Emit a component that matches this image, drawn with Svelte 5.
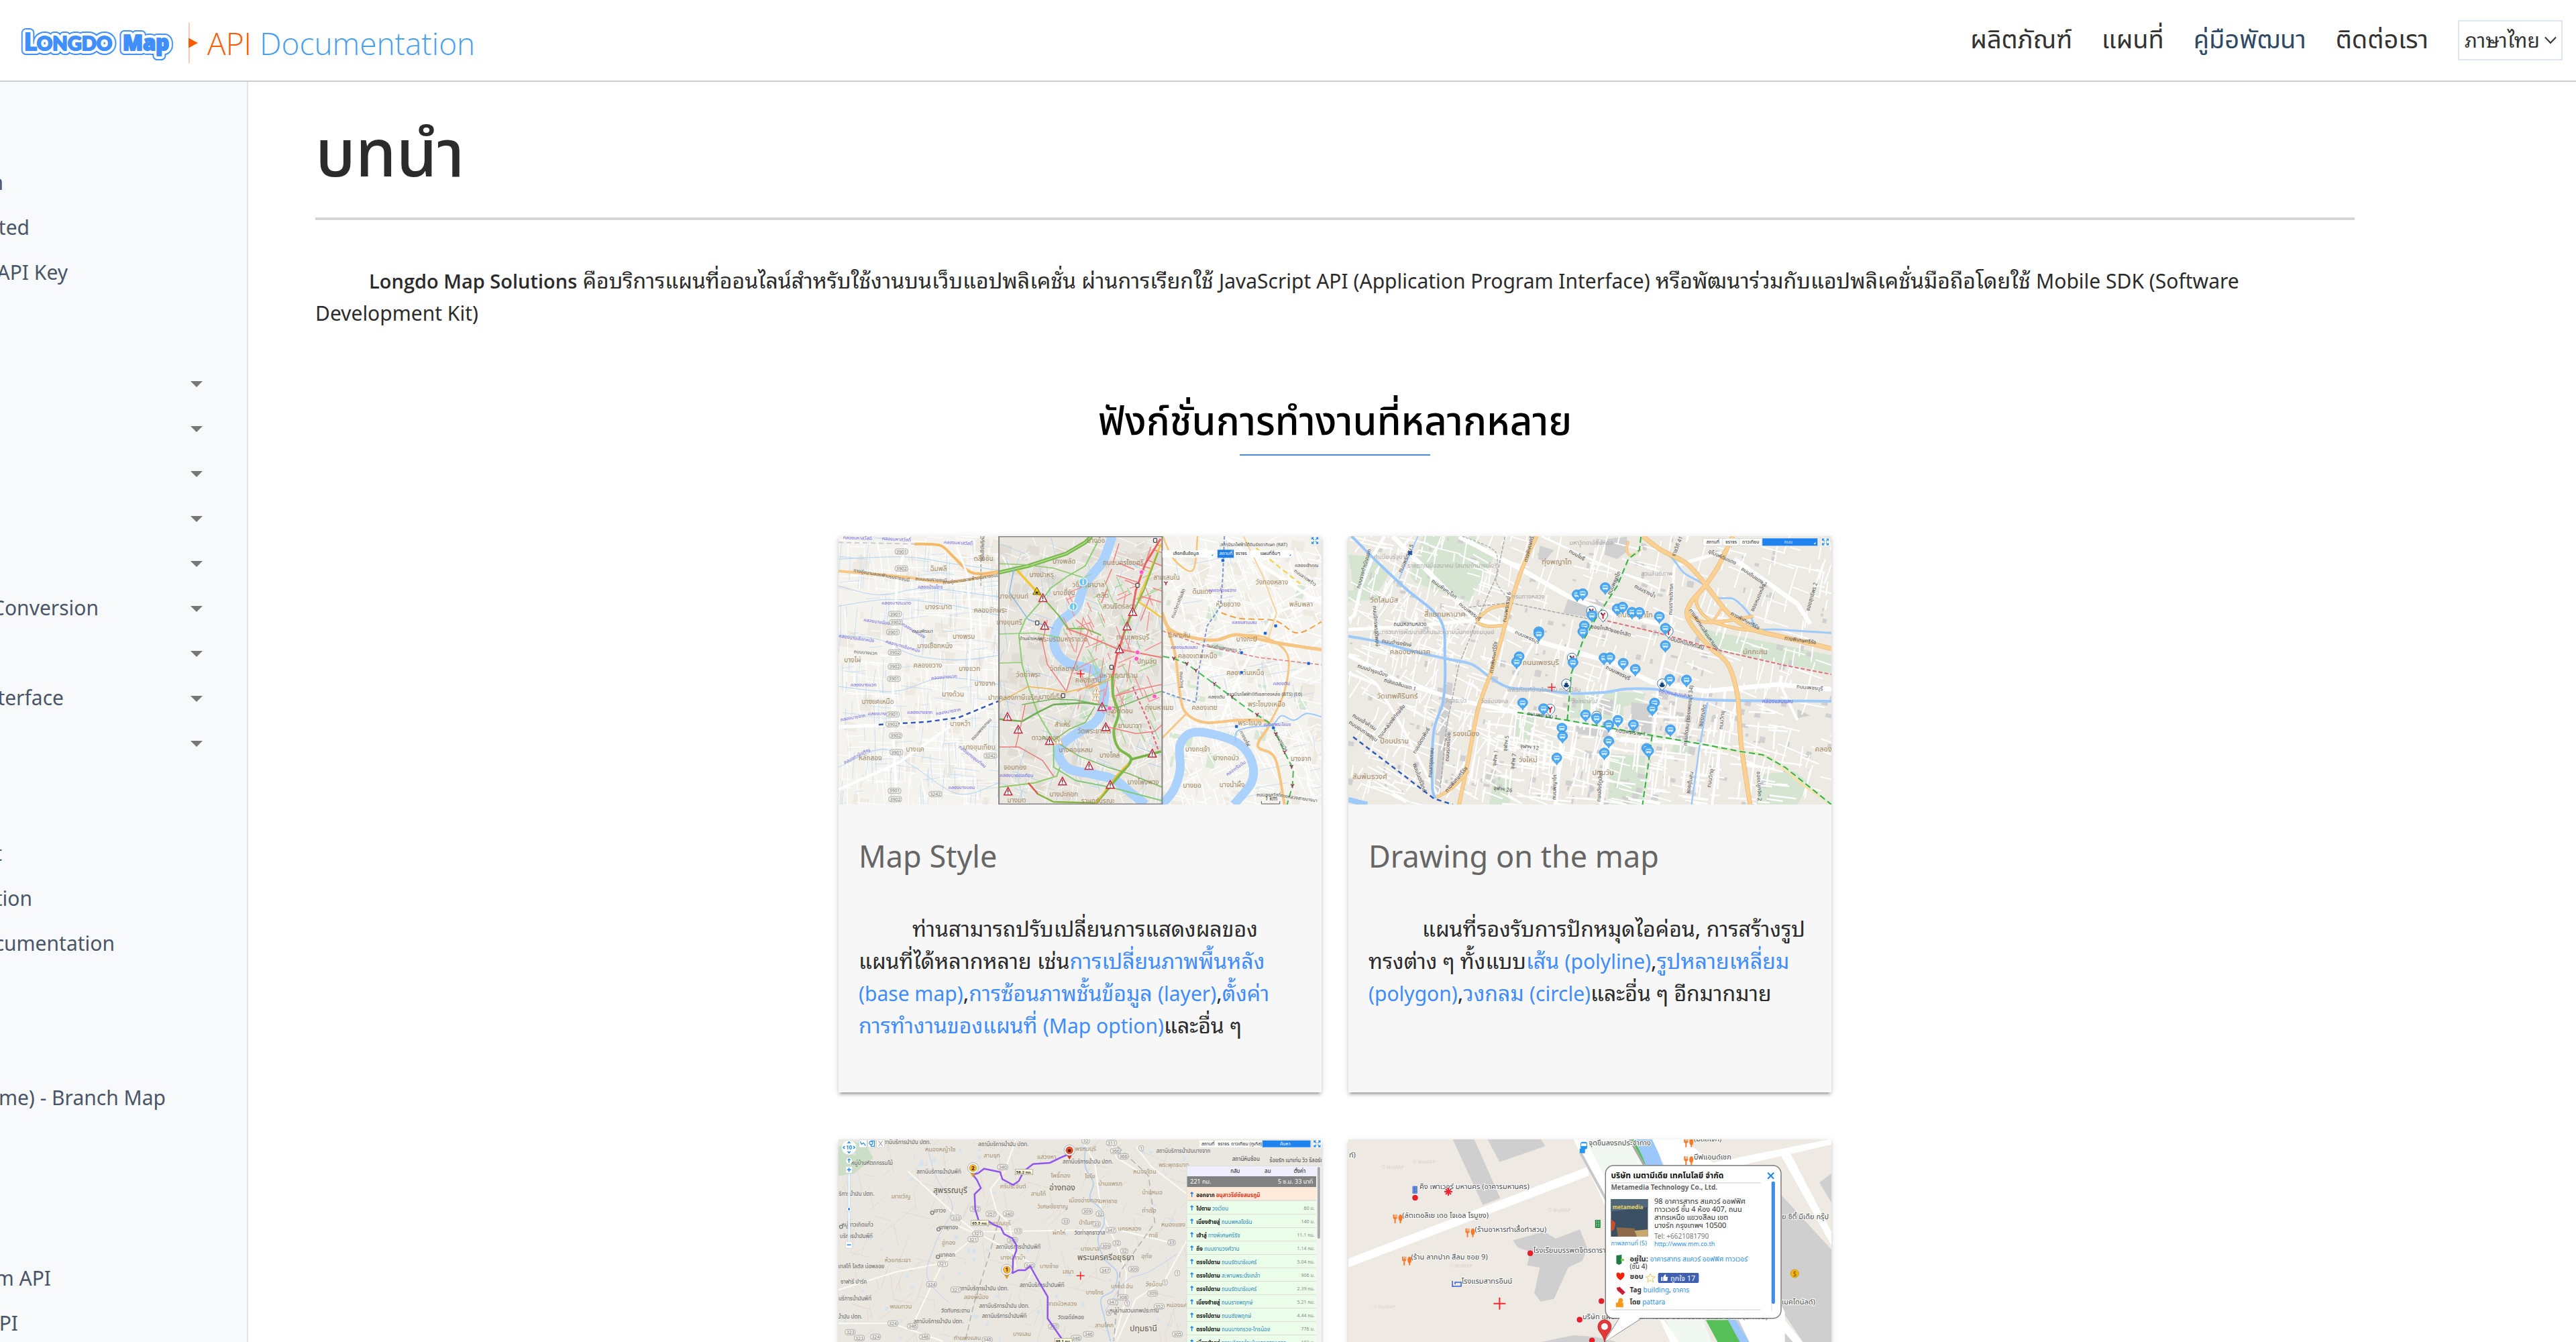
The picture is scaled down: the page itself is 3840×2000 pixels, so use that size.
<script>
  const W = 720 / 1527;

  const px = (x) => Math.round((x - 20) * W * 10) / 10;
  const py = (y) => Math.round((y - 27) / 0.3) / 10;
  const read = (s) => s.trim().split(/\s+/).map((p) => { const [x, y] = p.split(',').map(Number); return [px(x), py(y)]; });
  const line = (s) => 'M' + read(s).map((p) => p.join(' ')).join('L');
  const curve = (s) => {
    const p = read(s);
    let d = `M${p[0][0]} ${p[0][1]}`;
    for (let i = 0; i < p.length - 1; i++) {
      const a = p[i - 1] ?? p[i], b = p[i], c = p[i + 1], e = p[i + 2] ?? c;
      d += `C${(b[0] + (c[0] - a[0]) / 6).toFixed(1)} ${(b[1] + (c[1] - a[1]) / 6).toFixed(1)} ${(c[0] - (e[0] - b[0]) / 6).toFixed(1)} ${(c[1] - (e[1] - b[1]) / 6).toFixed(1)} ${c[0]} ${c[1]}`;
    }
    return d;
  };
  const points = (s) => s.trim().split(/\s+/).map((p) => p.split(',').map(Number));

  function random(seed) {
    return () => { seed = (seed * 16807) % 2147483647; return seed / 2147483647; };
  }
  // Short street pieces scattered over an area, running along one of the given headings.
  function streets(seed, count, x0, y0, x1, y1, min, max, angles) {
    const r = random(seed);
    let d = '';
    for (let i = 0; i < count; i++) {
      const x = x0 + r() * (x1 - x0), y = y0 + r() * (y1 - y0);
      const a = ((angles[Math.floor(r() * angles.length)] + r() * 6 - 3) * Math.PI) / 180;
      const l = min + r() * (max - min);
      d += `M${x.toFixed(1)} ${y.toFixed(1)}l${(Math.cos(a) * l).toFixed(1)} ${(Math.sin(a) * l).toFixed(1)}`;
    }
    return d;
  }
  function blocks(seed, count, x0, y0, x1, y1, size) {
    const r = random(seed);
    let d = '';
    for (let i = 0; i < count; i++) {
      const x = x0 + r() * (x1 - x0), y = y0 + r() * (y1 - y0), w = 2 + r() * size, h = 2 + r() * size;
      d += `M${x.toFixed(1)} ${y.toFixed(1)}l${w.toFixed(1)} ${(w * 0.2).toFixed(1)}l${(-h * 0.2).toFixed(1)} ${h.toFixed(1)}l${(-w).toFixed(1)} ${(-w * 0.2).toFixed(1)}z`;
    }
    return d;
  }

  const nav = [
    { label: 'ผลิตภัณฑ์' }, { label: 'แผนที่' }, { label: 'คู่มือพัฒนา', active: true }, { label: 'ติดต่อเรา' }
  ];

  const menu = [
    [{ t: 'n', w: 5 }, { t: 'ted', w: 44 }, { t: 'API Key', w: 101 }],
    [{ more: 1 }, { more: 1 }, { more: 1 }, { more: 1 }, { more: 1 }, { t: 'Conversion', w: 147, more: 1 }, { more: 1 }, { t: 'terface', w: 95, more: 1 }, { more: 1 }],
    [{ t: 't', w: 3 }, { t: 'tion', w: 48 }, { t: 'cumentation', w: 171 }],
    [{ t: 'ame) - Branch Map', w: 247 }],
    [{ t: 'm API', w: 76 }, { t: 'PI', w: 27 }]
  ];

  const alerts = points('666,303 672,427 950,365 932,430 908,532 853,790 865,880 588,891 554,834 687,942 812,1053 728,1123 556,1168 879,1138 1012,998');
  const cautions = points('835,718 835,747 717,942');
  const stations = points('1235,136 1402,428 1369,461 1294,548 1294,637 1506,596 1395,884 1278,878');
  const bts = points('1055,238 1080,574 1121,598 1150,628 1208,688 1264,745 1343,826 1402,912 1430,993 1452,1058 1455,1144');
  const shops = points('978,188 965,547 962,575 877,797 1019,743');
  const shields1 = [[219,96,'3901'],[219,172,'3902'],[199,375,'3901'],[201,412,'3902'],[192,456,'3901'],[197,547,'3902'],[197,610,'3902'],[195,665,'3901'],[192,824,'3901'],[190,868,'3902'],[201,919,'3902'],[203,993,'3901'],[197,1166,'3901'],[199,1203,'3902'],[326,1180,'3242'],[500,1009,'3242']];
  const brown = '#a0875f', dark = '#555', violet = '#6f66dd';
  const names1 = [
    [336,183,'ฉิมพลี'],[478,138,'ตลิ่งชัน'],[336,354,'บางระมาด'],[416,487,'บางพรม'],[325,528,'บางเชือกหนัง'],[64,592,'บางไผ่'],[302,616,'คลองขวาง'],[434,629,'บางแวก'],[483,695,'บางจาก'],[382,745,'บางด้วน'],[144,778,'บางแคเหนือ'],[405,877,'บางหว้า'],[262,990,'บางแค'],[120,1030,'หลักสอง'],[465,980,'บางขุนเทียน'],[500,368,'คลองชักพระ'],
    [662,210,'บางบำหรุ'],[733,150,'บางพลัด'],[834,58,'บางอ้อ'],[733,292,'บางยี่ขัน'],[572,306,'บางขุนนนท์'],[810,256,'วชิรพยาบาล'],[855,304,'ดุสิต'],[908,350,'สวนจิตรลดา'],[920,157,'ถนนนครไชยศรี'],[560,422,'บางขุนศรี'],[730,499,'พระบรมมหาราชวัง'],[620,656,'วัดท่าพระ'],[733,629,'วัดกัลยาณ์'],[810,682,'คลองสาน'],[905,660,'มหาพฤฒาราม'],[995,597,'ปทุมวัน'],[950,490,'ถนนเพชรบุรี'],[575,760,'ปากคลองภาษีเจริญ'],[693,757,'บางยี่เรือ'],[728,880,'สำเหร่'],[829,910,'วัดพระยาไกร'],[941,884,'ยานนาวา'],[908,819,'ทุ่งวัดดอน'],[675,940,'ดาวคะนอง'],[770,994,'บางคอแหลม'],[877,1017,'บางโคล่'],[578,1071,'จอมทอง'],[732,1190,'บางปะกอก'],[583,1219,'บางมด'],[983,1136,'บางโพงพาง'],[840,1220,'ราษฎร์บูรณะ'],[1034,803,'ทุ่งมหาเมฆ'],
    [1057,223,'สามเสนใน'],[1170,286,'ดินแดง'],[1390,242,'วังทองหลาง'],[1252,342,'ห้วยขวาง'],[1482,342,'พลับพลา'],[1097,479,'มักกะสัน'],[1310,497,'บางกะปิ'],[1155,574,'คลองเตยเหนือ'],[1306,649,'คลองตันเหนือ'],[1373,789,'พระโขนงเหนือ'],[1177,803,'คลองเตย'],[1320,872,'พระโขนง'],[1155,990,'บางกะเจ้า'],[1245,1029,'บางกอบัว'],[1482,1031,'บางจาก'],[1138,1152,'บางยอ'],[1264,1148,'บางน้ำผึ้ง']
  ];
  const canals1 = [[80,42,'คลองมหาสวัสดิ์',2],[203,48,'คลองมหาสวัสดิ์',3],[398,64,'คลองมหาสวัสดิ์',3],[310,262,'คลองบ้านไทร',0],[203,332,'คลองบางระมาด',0],[140,416,'คลองบางน้อย',8],[255,455,'คลองบางน้อย',30],[76,491,'คลองบางเชือกหนัง',8],[222,526,'คลองบางเชือกหนัง',16],[354,664,'คลองบางแวก',-5],[99,700,'คลองบางแวก',0],[66,845,'คลองบางจาก',-10],[153,829,'คลองบางจาก',0],[277,823,'คลองบางจาก',0],[368,818,'คลองบางจาก',-10],[80,1016,'คลองภาษีเจริญ',-28],[440,1018,'คลองบางขุนเทียน',38],[409,1159,'คลองบางบอน',0],[583,1103,'คลองบางขุนเทียน',0],[1233,276,'คลองห้วยขวาง',0],[1303,419,'คลองสามเสน',0],[1113,531,'คลองแสนแสบ',0],[1420,692,'คลองตัน',0],[1407,876,'คลองพระโขนง',0],[1279,1070,'คลองเรือบิน',-35]];
  const roads1 = [[155,208,'ทางคู่ขนานลอยฟ้าบรมราชชนนี',10],[313,228,'ถนนบรมราชชนนี',3],[440,225,'ทางคู่ขนานลอยฟ้าบรมราชชนนี',-8],[105,554,'ถนนบางแวก',5],[286,458,'ถนนพัฒนา',0],[475,895,'ถนนเพชรเกษม',-48],[1333,71,'สถานีรถไฟฟ้าใต้ดินรัชดาภิเษก (RAT)',0],[1366,742,'สถานีรถไฟฟ้าบีทีเอสทองหล่อ (BTS) (E6)',0],[1215,754,'คลองตัน',0],[1500,166,'คลองเจ้าคุณ',0],[1237,534,'ถนนกำแพงเพชร 7',10],[1492,218,'ถนนลาดพร้าว',35],[1098,330,'ถนนวิภาวดีรังสิต',-68],[1300,935,'ทางรถไฟ',62],[1415,950,'ถนนสุขุมวิท',60],[1475,1205,'ทางหลวงสายบางนา',8],[1100,670,'ถนนวิทยุ',88],[480,80,'ถนนชัยพฤกษ์',-88],[1380,1190,'ถนนสุขสวัสดิ์',0],[628,491,'บ้านช่างหล่อ',0]];

  const buses = points('743,291 761,286 832,259 870,354 887,346 917,369 940,370 1003,389 790,383 766,430 761,457 622,456 622,467 1022,440 1022,518 560,568 552,592 730,595 828,574 847,572 889,597 927,624 1036,669 1089,672 571,775 637,800 988,775 981,802 770,828 805,843 872,852 843,874 921,872 1038,894 695,887 697,924 843,946 829,998 963,978 969,990 679,1021');
  const trains = points('788,364 825,382 1032,454 727,574 658,802 804,834');
  const boats = points('709,690 1012,689');
  const names2 = [[133,325,'วัดโสมนัส'],[325,387,'สี่แยกมหานาค'],[215,556,'คลองมหานาค'],[679,152,'ทุ่งพญาไท'],[628,602,'ถนนเพชรบุรี'],[927,389,'ถนนพญาไท'],[1306,554,'มักกะสัน'],[175,754,'วัดเทพศิรินทร์'],[392,922,'รองเมือง'],[166,955,'ป้อมปราบ'],[88,1114,'สัมพันธวงศ์'],[588,1037,'วังใหม่'],[825,1096,'ปทุมวัน'],[1522,989,'คลอง']];
  const places2 = [[155,130,'ทำเนียบรัฐบาล'],[347,168,'ราชตฤณมัยสมาคม (สนามม้านางเลิ้ง)'],[788,65,'มหาวิทยาลัยมหิดล'],[995,205,'สวนสันติภาพ'],[588,305,'กรมทางหลวง'],[290,465,'กระทรวงการพัฒนาสังคมและความมั่นคงของมนุษย์'],[638,724,'พิพิธภัณฑ์บ้านไทยจิม ทอมป์สัน'],[767,773,'วังสระปทุม'],[482,773,'วัดชัยมงคล'],[360,770,'วัดสระบัว']];
  const roads2 = [[74,175,'ถนนราชดำเนินนอก',-74],[207,130,'ถนนพระราม 5',-66],[598,75,'ทางพิเศษศรีรัช',-76],[526,345,'ถนนพระราม 6',-80],[484,570,'ทางพิเศษศรีรัช',-82],[320,270,'ถนนพิษณุโลก',36],[400,370,'ถนนเพชรบุรี',38],[215,428,'ถนนหลานหลวง',0],[583,485,'ถนนเพชรบุรี',24],[172,512,'ถนนดำรงรักษ์',8],[95,635,'ถนนบำรุงเมือง',18],[182,698,'ถนนเฉลิมเขต 1',16],[102,430,'ถนนจักรพรรดิพงษ์',86],[870,645,'ถนนเพชรบุรี',26],[955,280,'ถนนรางน้ำ',28],[740,118,'ถนนโยธี',30],[1065,75,'ราชวิถี 41',-68],[1200,128,'อุโมงค์ดินแดง',24],[1300,215,'ถนนดินแดง 1',34],[1272,412,'ทางพิเศษศรีรัช',28],[1448,500,'ทางพิเศษศรีรัช',8],[1085,512,'ถนนนิคมมักกะสัน',16],[1140,450,'ทางพิเศษเฉลิมมหานคร',56],[1320,305,'ซอยหมอเหล็ง',-66],[1490,300,'ซอยสุทธิพร 2',-74],[1478,712,'ถนนเพชรบุรี',5],[1100,830,'ถนนชิดลม (ซอยเพชรบุรี 34)',-84],[1145,830,'ซอยสมคิด',-80],[1206,850,'ถนนวิทยุ',-84],[1105,1130,'ซอยต้นสน',-80],[1170,1110,'ถนนวิทยุ',-80],[912,912,'ถนนพระราม 1',8],[633,836,'ถนนพระราม 1',8],[592,978,'จุฬาฯ 12',8],[508,1166,'จุฬาฯ 26',8],[524,955,'จุฬาฯ 5',-82],[490,1020,'จุฬาฯ 1',-82],[547,1035,'จุฬาฯ 7',-82],[340,970,'ถนนรองเมือง',-86],[286,1040,'ถนนกรุงเกษม',-86],[68,865,'ถนนเจ้าคำรบ',32],[160,860,'ถนนหลวงพิทักษ์ชัย',-52],[255,945,'ถนนมิตรพันธ์',-60],[365,1120,'ทางพิเศษศรีรัช',-50],[677,1150,'ถนนพญาไท',-88],[820,1145,'ถนนอังรีดูนังต์',-86],[1313,1145,'ซอยปลูกจิต 2',88],[1045,310,'ถนนราชปรารภ',-88],[865,240,'ถนนพญาไท',-66],[64,905,'ถนนยมราชสุขุม',34],[240,1110,'ถนนไมตรีจิตต์',70],[818,445,'ซอยโกสิต',8],[880,466,'ซอยโกสิต',14]];

  const steps = [
    ['ไปตาม', 'วงเวียน', '60 ม.'], ['เบี่ยงซ้ายสู่', 'ถนนพหลโยธิน', '140 ม.'], ['เข้าสู่', 'ทางพิเศษศรีรัช', '11.1 กม.'], ['ถึง', 'ถนนงามวงศ์วาน', '1.14 กม.'],
    ['ตรงไปตาม', 'ถนนรัตนาธิเบศร์', '5.04 กม.'], ['ตรงไปตาม', 'สะพานพระนั่งเกล้า', '906 ม.'], ['ตรงไปตาม', 'ถนนรัตนาธิเบศร์', '2.39 กม.'], ['เบี่ยงซ้ายสู่', 'ถนนราชพฤกษ์', '5.21 กม.'],
    ['ตรงไปตาม', 'ถนนชัยพฤกษ์', '4.44 กม.'], ['ตรงไปตาม', 'ถนนบางกรวย-ไทรน้อย', '776 ม.'], ['เบี่ยงซ้ายสู่', 'ทางบริการด้านในของทางหลวง', '182 ม.']
  ];
  const shields3 = [[539,148,340],[801,32,32],[883,40,311],[896,76,366],[920,100,366],[977,64,1],[502,357,357],[557,357,340],[452,335,322],[391,375,333],[588,434,33],[460,446,321],[445,471,321],[738,391,33],[836,403,33],[806,346,309],[846,357,32],[881,430,347],[865,501,309],[899,488,32],[923,524,32],[1073,485,33],[349,581,321],[314,672,324],[391,696,321],[624,588,340],[863,609,347],[953,604,309],[1052,664,1],[1013,713,309],[887,751,347],[932,757,1],[919,730,308],[874,800,9],[1034,771,352],[192,847,324],[254,860,346],[57,886,323],[137,907,324],[292,907,346],[490,920,346],[700,860,340],[771,912,346],[810,895,346],[1091,895,305],[86,912,323],[1091,622,1],[570,475,340]];
  const names3 = [[342,78,'หนองหญ้าไซ'],[505,106,'สามชุก'],[217,288,'เลาขวัญ'],[368,495,'อู่ทอง'],[207,574,'ห้วยกระเจา'],[678,112,'แสวงหา'],[801,74,'พรหมบุรี'],[572,244,'ศรีประจันต์'],[722,194,'โพธิ์ทอง'],[815,197,'ไชโย'],[652,276,'สามโก้'],[697,333,'วิเศษชัยชาญ'],[798,305,'เมืองอ่างทอง'],[872,310,'มหาราช'],[879,231,'บ้านแพรก'],[988,176,'หนองโดน'],[1080,148,'พระพุทธบาท'],[1012,269,'บ้านหมอ'],[1002,351,'ท่าเรือ'],[804,406,'ป่าโมก'],[717,449,'ผักไห่'],[940,431,'นครหลวง'],[1015,461,'ภาชี'],[1078,413,'หนองแซง'],[815,523,'บางบาล'],[994,556,'อุทัย'],[571,561,'บางปลาม้า'],[686,601,'บางซ้าย'],[746,624,'เสนา'],[524,407,'สุพรรณบุรี'],[830,716,'บางไทร'],[916,689,'บางปะอิน'],[1017,682,'วังน้อย'],[455,739,'สองพี่น้อง'],[217,779,'พนมทวน'],[727,767,'ลาดบัวหลวง'],[860,865,'สามโคก'],[600,904,'บางเลน'],[427,922,'กำแพงแสน'],[1090,775,'หนองแค']];
  const stops3 = [[232,46,'สถานีบริการน้ำมัน ปตท.'],[541,54,'สถานีบริการน้ำมัน ปตท.'],[808,132,'สถานีบริการน้ำมัน ปตท.'],[1110,84,'สถานีบริการน้ำมันบางจาก'],[337,177,'สถานีบริการน้ำมันพีที'],[72,276,'บริการน้ำมัน ปตท.'],[588,514,'สถานีบริการน้ำมันพีที'],[663,684,'สถานีบริการน้ำมันพีที'],[478,700,'สถานีบริการน้ำมัน ปตท.'],[544,778,'สถานีบริการน้ำมัน ปตท.'],[544,821,'สถานีบริการน้ำมันพีที'],[336,846,'สถานีบริการน้ำมัน ปตท.'],[126,138,'หมู่บ้านหัตถกรรมไม้'],[80,415,'หมู่ดาวเกิดแก้ว'],[76,465,'บริการน้ำมันพีที'],[92,599,'เทสโก้ โลตัส บ่อพลอย'],[68,670,'ซาฟารี ปาร์ค'],[72,744,'บริการน้ำมันพีที'],[56,824,'น้ำมัน ปตท.'],[390,797,'วัดทับกระดาน'],[755,828,'วัดเจดีย์หอย'],[955,797,'หมู่บ้านสวนเทพประทาน'],[814,449,'วัดท่าสุทธาวาส'],[340,352,'เขาวง'],[367,427,'เขาพุทอง'],[363,550,'เขาคอก']];

  const food4 = [[176,378],[405,440],[205,566],[1096,38],[1096,118]];
  const dots4 = points('231,285 595,533 820,747 751,830 790,923');
  const names4 = [[245,245,'คิง เพาเวอร์ มหานคร (อาคารมหานคร)'],[190,376,'(ลัตเตอลิเย เดอ โจเอล โรบูชง)'],[420,437,'(ร้านอาหารทำเสื้อทำสวน)'],[605,531,'โรงเรียนบรรพตจิตรดาราม)'],[218,562,'(ร้าน ลาภปาก สีลม ซอย 9)'],[378,670,'โรงแรมสาทรอินน์'],[780,50,'จุดขึ้นลงรถประจำทาง'],[1112,34,'(มิสสโจ๊ก)'],[1112,114,'บีฟแอนด์เชก'],[1390,382,'ย ซิตี้ มีเดีย กรุ๊ป'],[1390,762,'เมคโดนัลด์)'],[22,104,'ท์)'],[760,829,'บริษัท แผนที่'],[945,829,'เทคโนโลยี อินเตอร์เนชั่นแนล จำกัด (มหาชน)']];
</script>

{#snippet labels(list, size, color, dy)}
  {#each list as [x, y, t, a]}
    <text x={px(x)} y={py(y + dy)} font-size={size} fill={color} text-anchor="middle" transform={a ? `rotate(${a} ${px(x)} ${py(y + dy)})` : undefined}>{t}</text>
  {/each}
{/snippet}

{#snippet shields(list, dy)}
  {#each list as [x, y, t]}
    <rect x={px(x) - (String(t).length * 4 + 3) / 2} y={py(y + dy) - 4} width={String(t).length * 4 + 3} height="8" rx="3" fill="#f6f4ee" stroke="#999" stroke-width=".8" />
    <text x={px(x)} y={py(y + dy) + 2.500} font-size="7" fill="#777" text-anchor="middle">{t}</text>
  {/each}
{/snippet}

{#snippet cross(x, y, dy)}
  <path d={`M${px(x) - 6} ${py(y + dy)}h12M${px(x)} ${py(y + dy) - 6}v12`} stroke="#f5242b" stroke-width="1.5" />
{/snippet}

{#snippet expand(x, y, dy)}
  <g transform={`translate(${px(x)} ${py(y + dy)})`}>
    <rect x="-7" y="-7" width="14" height="14" rx="3" fill="#fff" stroke="#d5d5d5" stroke-width=".6" />
    <path d="M-4.500-1.500V-4.500H-1.500M1.500-4.500H4.500V-1.500M4.500 1.500V4.500H1.500M-1.500 4.500H-4.500V1.500M-4-4l3 3M4-4l-3 3M4 4l-3-3M-4 4l3-3" fill="none" stroke="#2a8cec" stroke-width="1.300" />
  </g>
{/snippet}

{#snippet styleMap()}
  <svg class="map" viewBox="0 0 720 400" role="img" aria-label="Bangkok map style">
    <rect width="720" height="400" fill="#f5f3ee" />
    <path d={blocks(9, 240, 0, 0, 720, 400, 20)} fill="#eeeae2" />
    <path d={blocks(77, 20, 490, 60, 690, 330, 20)} fill="#d8e8d4" />
    <path d={streets(15, 330, 0, 0, 240, 400, 12, 60, [0, 90, 6, 84])} stroke="#fff" stroke-width="1.2" />
    <path d={streets(31, 190, 0, 0, 240, 400, 10, 50, [88, 6, -6, 95])} stroke="#bdd9f0" stroke-width=".7" />
    <path d={streets(47, 420, 480, 0, 720, 400, 8, 46, [62, -28, 75, 12])} stroke="#fff" stroke-width="1.5" />
    <path d={streets(53, 40, 480, 0, 720, 400, 10, 50, [80, -10])} stroke="#b4d4f0" stroke-width=".7" />
    <g fill="none">
      <g stroke="#b1d2ef">
        <path d={curve('20,130 230,120 380,150 527,180')} />
        <path d={curve('20,250 150,290 300,260 527,300')} />
        <path d={curve('20,340 180,310 350,330 527,380')} />
        <path d={curve('20,470 150,490 260,560 400,580 527,560')} />
        <path d={curve('20,700 200,720 350,660 527,690')} />
        <path d={curve('20,1060 160,980 260,1060 400,1180 527,1130')} />
      </g>
      <path d={line('240,27 205,220 195,500 190,860 205,1227')} stroke="#fff" stroke-width="4" />
      <path d={line('20,880 190,870 420,835 527,765')} stroke="#fff" stroke-width="5" />
      <path d={line('20,1160 210,1040 400,850 527,740')} stroke="#fff" stroke-width="4" />
      <path d={line('20,55 260,62')} stroke="#ccc" stroke-width="2" stroke-dasharray="7 5" />
      <path d={curve('260,62 340,68 380,115 430,182 470,195 527,185')} stroke="#f5b968" stroke-width="4" />
      <path d={curve('20,183 230,210 340,232 430,222 527,188')} stroke="#f7c886" stroke-width="4" />
      <path d={line('390,60 425,190 440,420 430,700')} stroke="#fff" stroke-width="3" />
      <path d={line('147,870 300,857 400,838 525,765')} stroke="#3458b5" stroke-width="2.5" stroke-dasharray="7 5" />
      <path d={line('470,27 470,250')} stroke="#aaa" stroke-width="1.5" stroke-dasharray="4 3" />
    </g>
    <g fill="none">
      <path d={curve('1045,27 1080,130 1140,180 1155,27')} stroke="#f7c47c" stroke-width="2.500" />
      <path d={line('1240,27 1360,160 1547,330')} stroke="#fff" stroke-width="5" />
      <path d={line('1547,300 1400,370 1290,640 1230,850')} stroke="#fff" stroke-width="4" />
      <path d={curve('1043,370 1065,440 1120,475 1210,492 1280,468 1390,500 1547,535')} stroke="#f7c582" stroke-width="5" />
      <path d={curve('1060,440 1085,560 1100,740 1120,820 1180,860 1290,850 1380,862 1345,965 1400,1020 1430,1227')} stroke="#f7c582" stroke-width="4" />
      <path d={curve('1280,468 1370,480 1440,560 1430,720 1385,860')} stroke="#f7c582" stroke-width="3" />
      <path d={line('1380,480 1405,370 1360,200 1300,27')} stroke="#f7d69e" stroke-width="2" />
      <path d={line('1120,820 1043,930')} stroke="#f7c886" stroke-width="3" />
      <path d={line('1043,450 1170,515 1350,570 1547,602')} stroke="#e37b84" stroke-width="1.500" stroke-dasharray="6 3" />
      <path d={curve('1043,1227 1080,1160 1100,1070 1100,960 1140,905 1220,918 1290,960 1328,1040 1325,1130 1270,1227')} stroke="#abd1fd" stroke-width="13" />
      <path d={curve('1275,950 1280,900 1330,880 1390,872 1420,830 1460,850 1500,820 1547,835')} stroke="#9cc9fa" stroke-width="2" />
      <path d={line('1045,565 1080,574 1121,598 1208,688 1300,785 1390,870 1430,993 1458,1070 1455,1144 1438,1227')} stroke="#48b85a" stroke-width="2" stroke-dasharray="10 5" />
      <path d={line('1240,27 1235,200 1228,340 1185,430 1160,620 1150,770 1100,750 1043,722')} stroke="#7e96cf" stroke-width="2" stroke-dasharray="5 3" />
      <path d={curve('1230,370 1290,395 1400,405 1470,460 1547,410')} stroke="#f0a042" stroke-width="2" stroke-dasharray="9 5" />
      <path d={line('1340,80 1400,150 1480,240')} stroke="#f3d75d" stroke-width="2.500" stroke-dasharray="8 5" />
    </g>
    <svg x={px(527)} y="0" width={px(1043) - px(527)} height="400" viewBox={`${px(527)} 0 ${px(1043) - px(527)} 400`}>
      <rect x="230" width="260" height="400" fill="#e9e6df" />
      <path d={blocks(5, 120, 238, 0, 480, 400, 18)} fill="#e0dcd3" />
      <path d={blocks(51, 14, 330, 100, 480, 300, 20)} fill="#cfe0ca" />
      <path d={streets(71, 330, 238, 0, 482, 400, 8, 36, [65, -25, 100, 20])} stroke="#fff" stroke-width="1" />
      <path d={streets(83, 90, 238, 0, 482, 400, 10, 50, [80, 110, 20])} stroke="#a9ceee" stroke-width=".8" />
      <g fill="none">
        <path d={curve('885,27 855,140 800,240 770,350 715,420 703,520 745,595 825,625 858,690 855,790 830,860 755,925 715,990 745,1065 820,1090 890,1115 940,1170 990,1227')} stroke="#abd1fd" stroke-width="14" />
        <path d={streets(101, 60, 335, 70, 470, 250, 8, 34, [66, -24, 100])} stroke="#f58c8c" stroke-width="1.300" />
        <path d={streets(109, 40, 335, 60, 475, 290, 8, 34, [66, -24])} stroke="#99d68a" stroke-width="1.300" />
        <path d={streets(113, 14, 400, 10, 480, 90, 16, 46, [110, 20])} stroke="#f37c7c" stroke-width="1.500" />
        <path d={line('527,190 620,160 740,105 800,55 820,27')} stroke="#79bb4c" stroke-width="6" />
        <path d={line('527,190 620,160 740,105 800,55 820,27')} stroke="#d9efc2" stroke-width="1" />
        <path d={line('527,150 610,155 700,170 800,215')} stroke="#8fc96a" stroke-width="1.500" />
        <path d={line('585,180 640,265 668,305')} stroke="#f4c534" stroke-width="3.500" />
        <path d={line('668,305 715,380 745,440 800,440 850,470')} stroke="#78b94c" stroke-width="2" />
        <path d={line('840,50 800,160 740,210 690,260 665,310 610,400 590,470 600,600 620,700 650,820 700,940')} stroke="#8ccf72" stroke-width="2" />
        <path d={line('1040,60 1000,200 975,280 968,320 1010,360 1040,390')} stroke="#f4c534" stroke-width="2.500" />
        <path d={line('1038,40 990,150 960,270 950,350 925,450 900,560 886,660')} stroke="#e8635d" stroke-width="3" />
        <path d={line('1030,100 985,270 940,400 922,470')} stroke="#79b94c" stroke-width="2" />
        <path d={line('740,440 800,470 900,530 1043,570')} stroke="#ec7b76" stroke-width="2" />
        <path d={curve('886,650 888,740 905,820 890,900 905,975 945,1025 900,1110 830,1227')} stroke="#7cb84a" stroke-width="4" />
        <path d={line('830,1227 900,1095 935,1045')} stroke="#f1bd36" stroke-width="2" />
        <path d={line('945,1025 1040,990')} stroke="#77b347" stroke-width="3.500" />
        <path d={line('527,845 600,855 650,815 700,780 800,772 840,780')} stroke="#6dad53" stroke-width="2.500" />
        <path d={line('527,770 620,700 690,710 740,725 840,690 900,640')} stroke="#f0b548" stroke-width="1.500" />
        <path d={line('600,780 700,755 770,760 900,795 1000,740 1043,720')} stroke="#6fb35b" stroke-width="1.500" />
        <path d={line('1043,690 960,715 900,740')} stroke="#ef7d7d" stroke-width="1.500" />
        <path d={line('527,1150 640,1130 710,1100 720,1060')} stroke="#8fca63" stroke-width="2" />
        <path d={line('620,1130 650,1180 700,1215 830,1220')} stroke="#84b53f" stroke-width="2.500" />
        <path d={line('620,1130 650,1180')} stroke="#e85b55" stroke-width="2.500" />
        <path d={line('527,970 590,970 665,1030 700,1100')} stroke="#e67b7b" stroke-width="1.500" />
        <path d={line('665,920 700,960 700,1060 770,1120 880,1150 1043,1210')} stroke="#7ecb79" stroke-width="2" />
        <path d={line('830,790 800,860 750,890 700,940')} stroke="#77bf63" stroke-width="1.500" />
        <path d={line('700,940 780,1010 870,1060 940,1090 1043,1150')} stroke="#7cb95c" stroke-width="1.500" />
        <path d={line('527,465 640,460 680,470 720,480')} stroke="#8ccf72" stroke-width="1.500" />
        <path d={line('527,595 600,592')} stroke="#8ccf72" stroke-width="1.500" />
        <path d={line('740,720 760,630 790,520 810,450 770,400')} stroke="#ee8080" stroke-width="1.500" />
        <path d={line('950,700 1000,860 1030,980')} stroke="#e05d7b" stroke-width="2" stroke-dasharray="5 3" />
        <path d={line('870,880 960,910 1020,900 1043,870')} stroke="#ef7d7d" stroke-width="1.500" />
        <path d={line('575,170 560,280 620,400 700,440')} stroke="#88b9e8" stroke-width="1.500" />
        <path d={line('610,780 600,850 580,970')} stroke="#ef7d7d" stroke-width="1.500" />
        <path d={line('680,400 665,500 680,600 740,720')} stroke="#ef8080" stroke-width="1.500" />
      </g>
    </svg>
    {@render labels(names1, 10, brown, 0)}
    {@render labels(canals1, 7, violet, 0)}
    {@render labels(roads1, 7, dark, 0)}
    {@render shields(shields1, 0)}
    <rect x={px(527)} y=".5" width={px(1043) - px(527)} height="399" fill="none" stroke="#858585" stroke-width="2" />
    {#each [[793, 232], [762, 342]] as [x, y]}
      <circle cx={px(x)} cy={py(y)} r="6" fill="#6fc5ea" stroke="#e6f6fd" stroke-width="1.500" />
      <text x={px(x)} y={py(y) + 3.500} font-size="10" fill="#fff" font-weight="700" text-anchor="middle">i</text>
    {/each}
    {#each shops as [x, y]}<circle cx={px(x)} cy={py(y)} r="3.500" fill="#ff5cc0" stroke="#fff" stroke-width=".7" />{/each}
    {#each stations as [x, y]}<rect x={px(x) - 2.500} y={py(y) - 2.500} width="5" height="5" rx="1.500" fill="#1c62d0" stroke="#fff" stroke-width=".6" />{/each}
    {#each bts as [x, y]}<path d={`M${px(x) - 2.500} ${py(y) - 2.500}l2.500 2.500l2.500-2.500M${px(x)} ${py(y)}v3`} stroke="#94304b" stroke-width="1.500" fill="none" />{/each}
    {#each [[648, 415], [730, 740], [883, 613], [965, 247], [1021, 46]] as [x, y]}
      <rect x={px(x) - 2.500} y={py(y) - 3} width="5" height="6" rx="1" fill="#eee" stroke="#444" stroke-width="1.200" />
    {/each}
    {#each cautions as [x, y]}
      <path d={`M${px(x)} ${py(y) - 5.500}l5.500 10.500h-11z`} fill="#fff" stroke="#efa752" /><path d={`M${px(x)} ${py(y) - 2}v4M${px(x)} ${py(y) + 3}v1`} stroke="#666" />
    {/each}
    {#each alerts as [x, y]}
      <path d={`M${px(x)} ${py(y) - 6}l6 11.500h-12z`} fill="#fff" stroke="#c8283c" stroke-width="1.500" /><path d={`M${px(x)} ${py(y) - 2.500}v4.500M${px(x)} ${py(y) + 3}v1.200`} stroke="#222" stroke-width="1.200" />
    {/each}
    <path d={`M${px(647)} ${py(255)}l6 11h-12z`} fill="#f0c813" stroke="#6d5a05" />
    <rect x={px(647) - 2} y={py(275)} width="4" height="3" fill="#333" />
    {@render cross(785, 643, 0)}
    <rect x={px(1044)} y={py(90)} width={px(1208) - px(1044)} height="11" fill="#fff" />
    <rect x={px(1218)} y={py(88)} width={px(1270) - px(1218)} height="12" fill="#1c7ee8" />
    <rect x={px(1270)} y={py(90)} width={px(1316) - px(1270)} height="11" fill="#fff" />
    <rect x={px(1322)} y={py(90)} width={px(1457) - px(1322)} height="11" fill="#fff" />
    {@render labels([[1118, 112, 'เลือกชั้นข้อมูล'], [1293, 112, 'จราจร'], [1385, 112, 'แผนที่อื่นๆ']], 7, '#222', 0)}
    {@render labels([[1245, 112, 'สถานที่']], 7, '#fff', 0)}
    <path d={`M${px(1204)} ${py(107)}v2.500h-2.500zM${px(1450)} ${py(107)}v2.500h-2.500z`} fill="#1c7ee8" />
    <path d={`M${px(1357)} ${py(1212)}v4H${px(1415)}v-4`} fill="none" stroke="#555" />
    <text x={px(1388)} y={py(1208)} font-size="8" fill="#333" text-anchor="middle">1 km</text>
    {@render expand(1526, 47, 0)}
  </svg>
{/snippet}

{#snippet drawMap()}
  <svg class="map" viewBox="0 0 720 400" role="img" aria-label="Markers drawn on a map">
    <rect width="720" height="400" fill="#edeae4" />
    <g fill="#d5e5d2">
      <path d={line('255,27 420,27 480,120 430,250 400,320 230,235 215,200') + 'z'} />
      <path d={line('20,110 100,120 150,190 105,300 40,290') + 'z'} />
      <path d={line('730,730 830,720 960,730 950,770 890,790 890,845 720,840') + 'z'} />
      <path d={line('545,830 610,840 600,940 540,930') + 'z'} />
      <path d={line('850,1000 960,1010 950,1227 840,1227') + 'z'} />
      <path d={line('480,1105 540,1115 530,1227 465,1227') + 'z'} />
      <path d={line('1130,440 1380,510 1547,560 1547,640 1180,540') + 'z'} />
      <path d={line('1330,1090 1430,1080 1480,1130 1440,1227 1310,1227') + 'z'} />
      <path d={line('1050,950 1100,960 1090,1010 1040,1000') + 'z'} />
      <path d={line('20,270 110,270 120,310 20,320') + 'z'} />
    </g>
    <g fill="#d0d0d0">
      <path d={line('715,305 830,330 800,395 700,370') + 'z'} />
      <path d={line('835,40 900,30 905,90 870,130 830,110') + 'z'} />
      <path d={line('915,770 985,780 975,915 910,900') + 'z'} />
      <path d={line('820,750 860,760 850,830 810,815') + 'z'} />
      <path d={line('325,690 350,690 310,1190 290,1180') + 'z'} />
      <path d={line('1440,800 1480,830 1440,840') + 'z'} />
      <path d={line('740,870 850,890 845,930 740,910') + 'z'} />
      <path d={line('625,70 670,90 640,140 620,130') + 'z'} />
      <path d={blocks(21, 210, 0, 0, 720, 400, 8)} />
      <path d={blocks(29, 80, 300, 240, 620, 400, 10)} />
    </g>
    <path d={streets(201, 420, 0, 0, 720, 400, 12, 56, [-72, 20, -80, 14])} stroke="#fff" stroke-width="2" />
    <path d={streets(207, 180, 0, 0, 240, 400, 10, 50, [-55, 30, -80])} stroke="#fff" stroke-width="2" />
    <path d={streets(211, 160, 200, 260, 640, 400, 14, 60, [-84, 6])} stroke="#fff" stroke-width="2.500" />
    <g fill="none" stroke="#fff" stroke-linejoin="round">
      <path d={line('135,27 100,110 60,250 40,380 20,400')} stroke-width="5" />
      <path d={line('160,27 310,240 420,400 505,425 600,490 850,590 980,680 1150,720 1380,690 1547,712')} stroke-width="7" />
      <path d={line('20,445 200,432 430,402')} stroke-width="5" />
      <path d={line('370,30 560,170 720,300 850,370 1050,435')} stroke-width="7" />
      <path d={line('500,790 560,610 620,470')} stroke-width="4" />
      <path d={line('20,560 200,690 400,770 505,800 720,860 900,900')} stroke-width="6" />
      <path d={line('20,640 110,690 190,880 300,1180')} stroke-width="4" />
      <path d={line('700,860 690,1000 675,1227')} stroke-width="6" />
      <path d={line('860,880 840,1020 820,1227')} stroke-width="6" />
      <path d={line('1050,160 1040,430 1000,680 985,920')} stroke-width="4" />
      <path d={line('1050,160 1200,100')} stroke-width="5" />
      <path d={line('1240,130 1350,240 1440,330 1480,420')} stroke-width="7" />
      <path d={line('630,27 800,140 1000,260')} stroke-width="3" />
      <path d={line('850,590 830,720 780,830')} stroke-width="3" />
      <path d={line('1210,720 1200,900 1170,1227')} stroke-width="4" />
      <path d={line('880,930 1100,960 1250,985')} stroke-width="4" />
      <path d={line('1390,650 1385,690 1440,850')} stroke-width="4" />
    </g>
    <g fill="none">
      <path d={curve('380,27 480,90 490,170 490,240 540,330')} stroke="#b5b5b5" stroke-dasharray="4 2" stroke-width="1.500" />
      <path d={line('515,30 490,200 440,360 370,600 330,880 310,1160')} stroke="#aaa" stroke-width="1.500" stroke-dasharray="5 2" />
      <path d={line('400,345 530,325 790,400')} stroke="#aaa" stroke-width="1.500" stroke-dasharray="5 2" />
      <path d={curve('30,27 110,140 200,260 310,400 325,560 320,760 290,900 285,1140 295,1200')} stroke="#98c6fb" stroke-width="4" />
      <path d={line('240,27 180,220')} stroke="#a5cdfb" stroke-width="2" />
      <path d={curve('20,475 120,500 220,540 330,575 410,600 470,660 530,705 620,712 720,730 830,725 900,710 1010,715 1060,740 1170,760 1547,765')} stroke="#9dc9fb" stroke-width="4" />
      <path d={curve('980,70 1040,120 1080,190 1140,240 1180,300 1240,310 1290,380 1310,440 1380,445 1547,460')} stroke="#9dc9fb" stroke-width="3" />
      <path d={line('1155,770 1130,970 1105,1227')} stroke="#9dc9fb" stroke-width="2.500" />
      <path d={line('20,1205 60,1220 80,1227')} stroke="#9dc9fb" stroke-width="8" />
    </g>
    <g fill="none" stroke-linejoin="round">
      {#each ['#eab873', '#fbd193'] as c, i}
        <g stroke={c}>
          <path d={curve('615,27 570,170 535,320 505,480 470,640 430,800 400,1020 370,1227')} stroke-width={6 - i * 1.500} />
          <path d={curve('525,335 470,350 428,405 460,430 512,425')} stroke-width={5 - i * 1.500} />
          <path d={curve('400,1075 350,1150 300,1195')} stroke-width={5 - i * 1.500} />
          <path d={curve('950,27 1010,90 1090,150 1150,245 1220,370 1290,440 1400,480 1547,530')} stroke-width={7 - i * 1.500} />
          <path d={curve('1235,27 1190,160 1150,245 1100,330 1095,400 1160,520 1220,600 1250,740 1262,960 1290,1227')} stroke-width={7 - i * 1.500} />
          <path d={curve('1090,370 1140,410 1220,405 1300,385')} stroke-width={5 - i * 1.500} />
          <path d={curve('1150,245 1120,320 1160,400 1250,440 1330,450')} stroke-width={5 - i * 1.500} />
          <path d={curve('1165,270 1200,340 1165,420')} stroke-width={4 - i} />
          <path d={curve('905,50 900,90 915,115 945,85')} stroke-width={4 - i} />
        </g>
      {/each}
      <path d={curve('1180,972 1260,990 1340,1010 1400,1070 1460,1140 1540,1220')} stroke="#f4e3a8" stroke-width="4" />
    </g>
    <g fill="none">
      <path d={line('820,400 1000,460 1200,540 1400,605 1547,645')} stroke="#dc6f78" stroke-width="2" stroke-dasharray="6 3" />
      <g stroke="#d9efd9" stroke-width="3">
        <path d={line('945,30 940,90 905,130 870,250 800,400 760,500 725,640 712,850')} /><path d={line('555,815 710,850 850,885 980,918 1150,960 1260,990 1330,1005 1400,1060 1547,1227')} /><path d={line('980,918 970,1030 950,1227')} />
      </g>
      <g stroke="#37ae43" stroke-width="2" stroke-dasharray="9 5">
        <path d={line('945,30 940,90 905,130 870,250 800,400 760,500 725,640 712,850')} /><path d={line('555,815 710,850 850,885 980,918 1150,960 1260,990 1330,1005 1400,1060 1547,1227')} /><path d={line('980,918 970,1030 950,1227')} />
      </g>
      <path d={line('35,925 180,1080 290,1200 350,1227')} stroke="#2f5bb8" stroke-width="2.500" stroke-dasharray="7 5" />
      <path d={line('209,95 221,110')} stroke="#1b55aa" stroke-width="3" /><path d={line('221,95 209,110')} stroke="#1b55aa" stroke-width="3" />
    </g>
    {@render labels(names2, 11, brown, 0)}
    {@render labels(places2, 9, '#a9a9a9', 0)}
    {@render labels(roads2, 8, '#4c4c4c', 0)}
    {@render labels([[1048, 738, 'คลองแสนแสบ', 10], [1377, 774, 'คลองแสนแสบ', 0]], 8, violet, 0)}
    {#each trains as [x, y]}
      <g transform={`translate(${px(x)} ${py(y)})`}>
        <path d="M0 10C-2 6-7 4-7-1A7 7 0 0 1 7-1C7 4 2 6 0 10z" fill="#fff" stroke="#3b70a8" /><path d="M-3-4l3 4l3-4M0 0v5" stroke="#e0262e" stroke-width="2" fill="none" /><path d="M-3-4l2 3" stroke="#1c4a94" stroke-width="2" />
      </g>
    {/each}
    {#each boats as [x, y]}
      <g transform={`translate(${px(x)} ${py(y)})`}>
        <path d="M0 10C-2 6-7 4-7-1A7 7 0 0 1 7-1C7 4 2 6 0 10z" fill="#fff" stroke="#3b70a8" /><path d="M0-5V-1M-2-2h4v3h-4zM-4 1h8l-1.500 3h-5z" fill="#14427f" stroke="#14427f" stroke-width=".6" />
      </g>
    {/each}
    {#each buses as [x, y]}
      <g transform={`translate(${px(x)} ${py(y)})`}>
        <path d="M0 10C-1 6-7.500 4-7.500-1A7.500 7 0 0 1 7.500-1C7.500 4 1 6 0 10z" fill="#4baaf5" stroke="#2f8ad4" stroke-width=".7" />
        <rect x="-4" y="-4" width="8" height="6" rx="1.500" fill="#d8edfd" /><path d="M-3.500-1.500h7" stroke="#4baaf5" stroke-width="2" /><path d="M-2.500 2.500h1M1.500 2.500h1" stroke="#fff" />
      </g>
    {/each}
    {@render cross(663, 703, 0)}
    <rect x={px(1141)} y={py(37)} width={px(1328) - px(1141)} height="11" fill="#fff" stroke="#ccc" stroke-width=".6" />
    <path d={line('1203,37 1203,70') + line('1256,37 1256,70')} stroke="#ccc" stroke-width=".8" />
    <rect x={px(1329)} y={py(37)} width={px(1503) - px(1329)} height="11" fill="#1f83ef" />
    {@render labels([[1172, 60, 'สถานที่'], [1230, 60, 'จราจร'], [1292, 60, 'ดาวเทียม']], 7, '#222', 0)}
    {@render labels([[1411, 60, 'ถนน']], 7, '#cfe6ff', 0)}
    <path d={`M${px(1497)} ${py(54)}v3h-3z`} fill="#fff" />
    {@render expand(1528, 53, 0)}
  </svg>
{/snippet}

{#snippet routeMap()}
  <svg class="map" viewBox="0 0 720 400" role="img" aria-label="Route planning on a map">
    <rect width="720" height="400" fill="#eae7e0" />
    <path d={line('20,60 60,30 110,60 130,110 70,180 20,190') + 'z'} fill="#cbdec6" />
    <path d={blocks(301, 90, 0, 0, 520, 400, 5)} fill="#d5e3ee" />
    <path d={streets(307, 260, 0, 0, 520, 400, 8, 44, [80, 15, -40, 110])} stroke="#e0dbd2" stroke-width="1" />
    <g fill="none" stroke="#fcfaf5" stroke-width="2">
      <path d={line('580,30 545,170 500,250 520,350 560,400 580,600')} />
      <path d={line('391,410 440,440 600,437 900,430 1073,490')} />
      <path d={line('240,170 340,300 400,380 460,450 350,580 314,680 250,870')} />
      <path d={line('20,700 200,620 349,580')} />
      <path d={line('790,30 830,130 850,350 900,500 930,620 925,760 890,930')} />
      <path d={line('1120,480 1050,660 960,740 900,930')} />
      <path d={line('20,850 190,850 350,930')} />
      <path d={line('480,460 640,590 620,650')} />
      <path d={line('960,60 1010,150 1120,270')} />
      <path d={line('880,40 900,110 980,180')} />
    </g>
    <g fill="none" stroke="#b0ccf0" stroke-width="1.600">
      <path d={curve('800,60 800,150 825,220 815,290 850,340 860,400 840,470 860,560 900,620 890,700 850,740 860,820 880,930')} />
      <path d={curve('300,60 330,200 380,330 330,480 300,640 370,760')} stroke-width=".8" />
      <path d={curve('1090,540 1000,620 930,660 860,800')} stroke-width=".8" />
    </g>
    <path d={line('530,370 495,550 450,750 420,930') + line('880,30 1000,190 1020,400 910,620 890,930')} fill="none" stroke="#b3b3b3" stroke-width="1.500" stroke-dasharray="9 5" />
    {@render labels(names3, 9, '#a49273', 3)}
    {@render labels(stops3, 8, '#666', 3)}
    {@render labels([[373, 263, 'สุพรรณบุรี'], [727, 252, 'อ่างทอง'], [865, 565, 'พระนครศรีอยุธยา'], [984, 882, 'ปทุมธานี']], 12, '#655c4e', 3)}
    {@render shields(shields3, 3)}
    {#each [[316, 352], [336, 426], [334, 549], [28, 415]] as [x, y]}<circle cx={px(x)} cy={py(y + 3)} r="2.500" fill="#ddd" stroke="#777" stroke-width="1.200" />{/each}
    <path d={line('748,93 720,110 688,132 635,137 605,170 590,213 572,231 538,205 531,173 480,158 462,178 445,185 457,208 470,245 450,272 452,340 463,390 497,395 512,410 533,421 543,450 570,470 582,500 582,525 572,560 570,625 588,612 610,612 626,594 652,660 681,730 681,828 725,917 760,1000')} fill="none" stroke="#9055ee" stroke-width="2.500" stroke-linejoin="round" />
    {#each [[445, 152, '2'], [552, 607, '1'], [750, 73, '■']] as [x, y, t], i}
      <g transform={`translate(${px(x)} ${py(y + 3)})`}>
        <path d="M-4 7h8l-4 7z" fill={i == 2 ? '#d9352b' : '#dc9a22'} />
        <circle r="8" fill="#fff" stroke="#8b8b8b" stroke-width=".7" /><circle r="5.500" fill={i == 2 ? '#ef4a26' : '#fbb734'} stroke="#777" stroke-width=".5" /><text y="3" font-size="8" font-weight="700" text-anchor="middle" fill="#402000">{t}</text>
      </g>
    {/each}
    {#each [[606, 170, '58.2 กม.'], [467, 397, '65.5 กม.'], [731, 925, '98.1 กม.']] as [x, y, t]}
      <rect x={px(x) - 13} y={py(y + 3) - 4} width="26" height="8" fill="#fffbd9" stroke="#888" stroke-width=".6" /><text x={px(x)} y={py(y + 3) + 2.500} font-size="6" font-weight="700" text-anchor="middle" fill="#333">{t}</text>
    {/each}
    {@render cross(785, 634, 3)}
    <g fill="none" stroke="#268be8" stroke-width="1.600">
      <circle cx={px(53)} cy={py(63)} r="11" fill="#fff" stroke="#ddd" stroke-width=".8" />
      <path d={`M${px(53) - 2} ${py(63) - 6}l2-2l2 2M${px(53) - 2} ${py(63) + 6}l2 2l2-2M${px(53) - 6.500} ${py(63) - 2}l-2 2l2 2M${px(53) + 6.500} ${py(63) - 2}l2 2l-2 2`} />
      <circle cx={px(53)} cy={py(123)} r="5" fill="#fff" stroke="#ccc" stroke-width=".8" /><path d={`M${px(53)} ${py(123) + 3}v-6M${px(53) - 2} ${py(123) - 1}l2-2l2 2`} stroke-width="1.200" />
      <rect x={px(53) - 1.500} y={py(180)} width="3" height="102" fill="#fff" stroke="#a6cdf2" stroke-width=".7" />
      {#each [163, 499] as y}<rect x={px(53) - 5} y={py(y) - 5} width="10" height="10" rx="2" fill="#fff" stroke="#ccc" stroke-width=".8" /><path d={`M${px(53) - 3} ${py(y)}h6`} />{/each}
      <path d={`M${px(53)} ${py(163) - 3}v6`} />
      <rect x={px(53) - 4} y={py(339) - 3} width="8" height="6" fill="#fff" stroke="#ccc" stroke-width=".7" /><circle cx={px(53)} cy={py(339)} r="1" />
      {#each [97, 125, 153] as x}<rect x={px(x) - 6} y={py(46) - 6} width="12" height="12" rx="2" fill="#fff" stroke="#ccc" stroke-width=".8" />{/each}
      <path d={`M${px(97) - 4} ${py(46) - 3}l2 4l3-2l3 4`} stroke-width="1.200" /><rect x={px(125) - 1} y={py(46) - 4} width="5" height="8" stroke-width="1.200" /><circle cx={px(125) - 1} cy={py(46) - 1} r="2.500" fill="#fff" stroke-width="1.200" />
      <path d={`M${px(153) - 3} ${py(46) - 4}l6 8m0-8l-6 8`} stroke="#888" stroke-width="1" />
    </g>
    <text x={px(53)} y={py(73)} font-size="8" font-weight="700" fill="#268be8" text-anchor="middle">10</text>
    <rect x={px(1161)} y={py(32)} width={px(1360) - px(1161)} height="10" fill="#fff" />
    <rect x={px(1360)} y={py(32)} width={px(1512) - px(1360)} height="10" fill="#1f83ef" />
    {@render labels([[1188, 51, 'สถานที่'], [1237, 51, 'จราจร'], [1310, 51, 'ดาวเทียม (กูเกิล)']], 7, '#222', 3)}
    {@render labels([[1432, 51, 'ค้นหา']], 7, '#fff', 3)}
    {@render labels([[1308, 119, 'สถานีหินซ้อน'], [1468, 126, 'ร้อยรัก เมาเท่น วิว รีสอร์ท']], 8, '#444', 3)}
    {@render expand(1533, 44, 3)}
    <rect x={px(1120)} y={py(144)} width={px(1547) - px(1120)} height="361" fill="#ddd" />
    <rect x={px(1122)} y={py(147)} width={px(1530) - px(1122)} height="15" fill="#eeeefe" />
    {@render labels([[1274, 173, 'กลับ'], [1377, 173, 'ลบ'], [1478, 173, 'ตั้งค่า']], 8, '#111', 3)}
    <rect x={px(1122)} y={py(192)} width={px(1530) - px(1122)} height="16" fill="#828282" />
    <text x={px(1132)} y={py(226)} font-size="9" fill="#fff">221 กม.</text>
    <text x={px(1520)} y={py(226)} font-size="9" fill="#fff" text-anchor="end">5 ช.ม. 33 นาที</text>
    <rect x={px(1122)} y={py(241)} width={px(1530) - px(1122)} height="19" fill="#ffeada" />
    <path d={`M${px(1137)} ${py(285)}v-6M${px(1137) - 2} ${py(270)}l2-2l2 2`} stroke="#1f83ef" fill="none" stroke-width="1.300" />
    <text x={px(1151)} y={py(284)} font-size="8" font-weight="700" fill="#222">ออกจาก <tspan fill="#e23418">อนุสาวรีย์ชัยสมรภูมิ</tspan></text>
    {#each steps as [a, b, c], i}
      <rect x={px(1122)} y={py(303 + i * 60)} width={px(1530) - px(1122)} height="19" fill="#eafeea" />
      <path d={`M${px(1137)} ${py(345 + i * 60)}v-6M${px(1137) - 2} ${py(330 + i * 60)}l2-2l2 2`} stroke="#1f83ef" fill="none" stroke-width="1.300" />
      <text x={px(1151)} y={py(344 + i * 60)} font-size="8" fill="#111"><tspan font-weight="700">{a}</tspan> <tspan fill="#2e86b8">{b}</tspan></text>
      <text x={px(1525)} y={py(343 + i * 60)} font-size="7" fill="#888" text-anchor="end">{c}</text>
    {/each}
    <rect x={px(1530)} y={py(147)} width="8" height="360" fill="#f3f3f3" />
    <rect x={px(1534)} y={py(150)} width="4" height="107" rx="2" fill="#aaa" />
  </svg>
{/snippet}

{#snippet placeMap()}
  <svg class="map" viewBox="0 0 720 400" role="img" aria-label="Place details on a map">
    <rect width="720" height="400" fill="#eeeae3" />
    <g fill="#cfcfcf">
      <path d={line('350,27 418,27 500,290 445,320') + 'z'} />
      <path d={line('460,27 630,27 642,58 498,128') + 'z'} />
      <path d={line('540,478 640,440 675,470 752,430 775,510 760,570 715,600 670,740 628,753 608,715 625,600 585,590 595,530 555,510') + 'z'} />
      <path d={line('1385,270 1547,520 1547,940 1460,940 1385,780') + 'z'} />
      <path d={line('1509,220 1547,180 1547,310') + 'z'} />
      <path d={line('630,933 730,903 800,910 870,933 870,1100 630,1100') + 'z'} />
      <path d={line('1230,835 1380,835 1500,1000 1300,1000') + 'z'} />
    </g>
    <path d={line('20,560 780,148 780,190 20,600') + 'z'} fill="#fff" />
    <path d={line('740,27 920,27 960,140 1170,940 1060,940 840,300') + 'z'} fill="#f1f8f1" />
    <path d={line('732,27 770,27 850,250 850,340 1000,800 1070,940 1040,940') + 'z'} fill="#fff" />
    <path d={line('755,90 840,310')} stroke="#c8c8c8" stroke-width="4" fill="none" />
    <path d={line('910,27 955,140')} stroke="#aaa" stroke-width="4" />
    <path d={line('918,27 962,140')} stroke="#4cc152" stroke-width="3" />
    <path d={line('926,27 985,27 1110,520 1290,940 1250,940 960,140') + 'z'} fill="#9bc7fb" />
    <path d={line('980,27 1080,27 1180,140 1400,800 1400,940 1290,940') + 'z'} fill="#fff" />
    <path d={line('1140,140 1540,27 1547,27 1547,50 1240,150') + 'z'} fill="#fff" />
    <path d={line('1380,80 1410,70 1547,440 1547,500') + 'z'} fill="#fff" />
    <path d={line('1380,800 1460,940 1430,940 1360,830') + 'z'} fill="#fff" />
    <path d={line('1150,835 1220,835 1260,940 1190,940') + 'z'} fill="#56bf57" />
    {#each [[160, 159], [259, 135], [687, 350], [376, 599], [134, 783]] as [x, y]}<text x={px(x)} y={py(y)} font-size="7" font-weight="700" fill="#dedad2" text-anchor="middle">© NuMAP</text>{/each}
    {#each names4 as [x, y, t]}<text x={px(x)} y={py(y + 3)} font-size="11" fill="#4a4a4a" stroke="#fff" stroke-width="2" paint-order="stroke">{t}</text>{/each}
    {#each food4 as [x, y]}<g transform={`translate(${px(x)} ${py(y + 3)})`} fill="#f47a2c"><path d="M-6-6h1v4h1v-4h1v4h1v-4h1v6l-2 1v6h-2v-6l-2-1v-6z" /><ellipse cx="4" cy="-1" rx="3" ry="5" /><path d="M3 3h2v4h-2z" /></g>{/each}
    {#each dots4 as [x, y]}<circle cx={px(x)} cy={py(y + 3)} r="4" fill="#ec1c2b" stroke="#c01520" stroke-width=".5" />{/each}
    <rect x={px(223)} y={py(236)} width="7" height="11" fill="#2c62d6" /><path d={`M${px(223) + 2} ${py(236) + 1}v9M${px(223) + 5} ${py(236) + 1}v9`} stroke="#fff" stroke-dasharray="1.500 1" />
    <rect x={px(800)} y={py(387)} width="8" height="12" fill="#238a43" /><path d={`M${px(800) + 2.500} ${py(387) + 1}v10M${px(800) + 5.500} ${py(387) + 1}v10`} stroke="#fff" stroke-dasharray="1.500 1" />
    <path d={`M${px(336)} ${py(261)}m-6 0h12m-6-6v12m-4-10l8 8m0-8l-8 8`} stroke="#f3222d" stroke-width="2" />
    <path d={`M${px(349)} ${py(660)}v9M${px(349)} ${py(684)}h13v-6h-9v3`} stroke="#2c62d6" stroke-width="1.500" fill="none" />
    <rect x={px(754)} y={py(38)} width="10" height="11" rx="3" fill="#2795ee" /><rect x={px(756)} y={py(45)} width="8" height="4" fill="#fff" /><rect x={px(751)} y={py(68)} width="8" height="7" fill="#2795ee" />
    <circle cx={px(1431)} cy={py(627)} r="6" fill="#f3b70c" stroke="#d39c06" /><text x={px(1431)} y={py(639)} font-size="10" fill="#8c6200" text-anchor="middle">$</text>
    <path d={`M${px(498) - 9} ${py(761)}h18M${px(498)} ${py(761) - 9}v18`} stroke="#f5242b" stroke-width="2" />
    <path d={line('833,930 830,929 880,820 955,820') + 'z'} fill="#fff" stroke="#888" />
    <rect x={px(833)} y={py(144)} width={px(1388) - px(833)} height={py(827) - py(144)} rx="12" fill="#fff" stroke="#7d7d7d" stroke-width="1.500" />
    <path d={line('836,928 882,815 952,815') + 'z'} fill="#fff" />
    <path d={`M${px(830)} ${py(935)}c-2-14-10-14-10-24a10 10 0 0 1 20 0c0 10-8 10-10 24z`} fill="#e2383a" stroke="#b52328" stroke-width=".7" /><circle cx={px(830)} cy={py(864)} r="5" fill="#fff" />
    <text x={px(850)} y={py(202)} font-size="12" font-weight="700" fill="#111">บริษัท เมตามีเดีย เทคโนโลยี จำกัด</text>
    <path d={`M${px(1346)} ${py(176)}l9 9m0-9l-9 9`} stroke="#1f83ef" stroke-width="2" />
    <path d={line('850,221 1324,221') + line('850,789 1324,789')} stroke="#ddd" stroke-width="1.500" />
    <path d={line('1358,215 1358,797')} stroke="#ddd" /><rect x={px(1358)} y={py(215)} width="5" height={py(762) - py(215)} rx="2" fill="#3f8cf1" />
    <text x={px(850)} y={py(251)} font-size="10" font-weight="700" fill="#666">Metamedia Technology Co., Ltd.</text>
    <rect x={px(850)} y={py(294)} width={px(967) - px(850)} height="56" fill="#3b5063" />
    <path d={line('850,294 967,294 967,330 850,350') + 'z'} fill="#51677a" /><path d={line('850,385 865,400 860,430 850,440') + 'z'} fill="#c84f32" />
    <path d={line('868,420 925,425 932,462 872,462') + 'z'} fill="#8c6a4a" /><path d={line('925,435 967,430 967,462 932,462') + 'z'} fill="#c9a86f" />
    <text x={px(855)} y={py(340)} font-size="8" fill="#e4d266" font-weight="700">metamedia</text>
    <g font-size="11" fill="#333">
      {#each ['98 อาคารสาทร สแควร์ ออฟฟิศ', 'ทาวเวอร์ ชั้น 4 ห้อง 407, ถนน', 'สาทรเหนือ แขวงสีลม เขต', 'บางรัก กรุงเทพฯ 10500'] as t, i}<text x={px(987)} y={py(314 + i * 36)}>{t}</text>{/each}
      <text x={px(987)} y={py(471)} fill="#777" font-size="10">Tel: +6621081790</text>
      <text x={px(987)} y={py(504)} fill="#2e8fdf" font-size="9">http://www.mm.co.th</text>
      <text x={px(850)} y={py(502)} fill="#2e8fdf" font-size="9">ภาพสถานที่ (5)</text>
      <text x={px(910)} y={py(573)}><tspan font-weight="700">อยู่ใน:</tspan> <tspan fill="#2e8fdf" font-size="10">อาคารสาทร สแควร์ ออฟฟิศ ทาวเวอร์</tspan></text>
      <text x={px(910)} y={py(607)} font-size="10">(ชั้น 4)</text>
      <text x={px(910)} y={py(652)} font-weight="700">ชอบ</text>
      <text x={px(910)} y={py(712)} font-size="10"><tspan font-weight="700">Tag</tspan> <tspan fill="#2e8fdf">building</tspan>, <tspan fill="#2e8fdf">อาคาร</tspan></text>
      <text x={px(910)} y={py(764)} font-size="10"><tspan font-weight="700">โดย</tspan> <tspan fill="#2e8fdf">pattara</tspan></text>
    </g>
    <path d={`M${px(867)} ${py(546)}l8-1v13l-4 2l-4-2z`} fill="#1f7a44" /><path d={`M${px(881)} ${py(566)}h5`} stroke="#7ac943" stroke-width="3" />
    <path d={`M${px(880)} ${py(657)}c-4-3-6-5-6-8a3 3 0 0 1 6-1a3 3 0 0 1 6 1c0 3-2 5-6 8z`} fill="#f5200c" />
    <path d={`M${px(975)} ${py(627)}l2 4.500l5 .5l-4 3l1.500 5l-4.500-3l-4.500 3l1.500-5l-4-3l5-.5z`} fill="#fff" stroke="#e8c55a" />
    <rect x={px(999)} y={py(624)} width={px(1128) - px(999)} height="15" rx="2" fill="#3f5fb2" />
    <g transform={`translate(${px(1009)} ${py(630)})`} fill="#fff"><path d="M0 4h2v6h-2zM3 4l3-4l1 1v3h3l-1 6h-6z" /></g>
    <text x={px(1038)} y={py(659)} font-size="11" fill="#fff">ถูกใจ 17</text>
    <path d={`M${px(868)} ${py(690)}l5-1l8 8l-4 4l-8-7z`} fill="#c81f36" /><path d={`M${px(868)} ${py(742)}m3 0a3.500 3.500 0 1 1 4 5h3v7h-11v-7h3z`} fill="#f59a1c" />
  </svg>
{/snippet}

<div class="shell">
  <header class="topbar">
    <a class="brand" href="#home">
      <svg class="wordmark" viewBox="0 0 230 50" aria-label="Longdo Map">
        {#each ['outline', 'halo', 'face'] as layer}
          <text class={layer} x="8" y="35"><tspan class="cap">L</tspan><tspan class="low">ONGDO</tspan><tspan class="map-word" x="155">Map</tspan></text>
        {/each}
      </svg>
      <svg class="divider" viewBox="0 0 16 60" aria-hidden="true"><path d="M1 0V60" stroke="#fcc9ae" stroke-width="2" /><path d="M0 22.500L14 30L0 37.500z" fill="#ff5a00" /></svg>
      <span class="product"><b>API</b> Documentation</span>
    </a>
    <nav class="links">
      {#each nav as item}<a href="#top" class:active={item.active}>{item.label}</a>{/each}
      <span class="lang">
        <select aria-label="ภาษา"><option>ภาษาไทย</option></select>
        <svg viewBox="0 0 18 12" aria-hidden="true"><path d="M1 1.500L9 10L17 1.500" fill="none" stroke="#333" stroke-width="2" /></svg>
      </span>
    </nav>
  </header>

  <div class="body">
    <aside class="sidebar">
      {#each menu as group, g}
        <ul class={`group g${g}`}>
          {#each group as item}
            <li>
              {#if item.t}<a href="#section" style:width={`${item.w}px`}>{item.t}</a>{:else}<span></span>{/if}
              {#if item.more}<button aria-label="ขยาย"><svg viewBox="0 0 18 9"><path d="M0 0H18L9 9z" fill="#777" /></svg></button>{/if}
            </li>
          {/each}
        </ul>
      {/each}
    </aside>

    <main class="content">
      <h1>บทนำ</h1>
      <p class="intro"><strong>Longdo Map Solutions</strong> คือบริการแผนที่ออนไลน์สำหรับใช้งานบนเว็บแอปพลิเคชั่น ผ่านการเรียกใช้ <span class="latin">JavaScript API (Application Program Interface)</span> หรือพัฒนาร่วมกับแอปพลิเคชั่นมือถือโดยใช้ <span class="latin">Mobile SDK (Software<br />Development Kit)</span></p>
      <h2>ฟังก์ชั่นการทำงานที่หลากหลาย</h2>
      <div class="cards">
        <article class="card">
          {@render styleMap()}
          <div class="text">
            <h3>Map Style</h3>
            <p>ท่านสามารถปรับเปลี่ยนการแสดงผลของ<br />แผนที่ได้หลากหลาย เช่น<a href="#base">การเปลี่ยนภาพพื้นหลัง<br /><span class="latin">(base map)</span></a>,<a href="#layer">การซ้อนภาพชั้นข้อมูล <span class="latin">(layer)</span></a>,<a href="#option">ตั้งค่า<br />การทำงานของแผนที่ <span class="latin">(Map option)</span></a>และอื่น ๆ</p>
          </div>
        </article>
        <article class="card">
          {@render drawMap()}
          <div class="text">
            <h3>Drawing on the map</h3>
            <p>แผนที่รองรับการปักหมุดไอค่อน, การสร้างรูป<br />ทรงต่าง ๆ ทั้งแบบ<a href="#polyline">เส้น <span class="latin">(polyline)</span></a>,<a href="#polygon">รูปหลายเหลี่ยม<br /><span class="latin">(polygon)</span></a>,<a href="#circle">วงกลม <span class="latin">(circle)</span></a>และอื่น ๆ อีกมากมาย</p>
          </div>
        </article>
        <article class="card">{@render routeMap()}</article>
        <article class="card">{@render placeMap()}</article>
      </div>
    </main>
  </div>
</div>

<style>
  :global(body) { background: #fff; }
  .shell {
    --sans: 'Noto Sans', 'Noto Sans Thai', sans-serif;
    --looped: 'Noto Sans Thai Looped', Sarabun, Loma, Garuda, Umpush, Waree, 'Noto Sans', sans-serif;
    display: grid;
    grid-template-rows: auto 1fr;
    height: 100vh;
    overflow: hidden;
    font-family: var(--sans);
    font-size: 30px;
    color: #2b2b2b;
  }
  a { color: inherit; text-decoration: none; }
  .topbar {
    display: flex;
    justify-content: space-between;
    align-items: center;
    height: 120px;
    padding: 0 20px 0 28px;
    border-bottom: 2px solid #ccc;
  }
  .brand { display: flex; align-items: center; }
  .wordmark { width: 230px; height: 50px; margin-top: 10px; overflow: visible; font-family: Lato, sans-serif; font-weight: 900; }
  .wordmark text { fill: #418ffe; stroke-linejoin: round; }
  .wordmark .outline { stroke: #418ffe; stroke-width: 14; }
  .wordmark .halo { stroke: #fff; stroke-width: 10; }
  .wordmark .face { stroke: #418ffe; stroke-width: 2; }
  .cap { font-size: 36px; }
  .low { font-size: 29px; }
  .map-word { font-size: 31px; font-family: 'Open Sans', sans-serif; font-weight: 800; }
  .divider { width: 16px; height: 60px; margin: 8px 12px 0 23px; }
  .product { margin-top: 8px; font: 300 46px/60px 'Open Sans', sans-serif; color: #4a9ff0; }
  .product b { font-weight: 300; color: #ff5a00; }
  .links { display: flex; align-items: center; gap: 44px; font-size: 38px; color: #333; }
  .links .active { color: #304a66; }
  .lang { position: relative; display: flex; align-items: center; height: 60px; box-sizing: border-box; width: 156px; border: 2px solid #dfe5ef; }
  .lang select { appearance: none; width: 100%; height: 56px; padding: 0 0 5px 8px; border: 0; background: none; font-family: var(--looped); font-size: 30px; color: #333; }
  .lang svg { position: absolute; right: 7px; width: 18px; height: 12px; pointer-events: none; }

  .body { display: grid; grid-template-columns: 370px 1fr; min-height: 0; }
  .sidebar { box-sizing: border-box; padding-top: 116px; overflow: hidden; background: #f7f9fb; border-right: 2px solid #dfe5ef; color: #4a5568; }
  .group { margin: 0 0 98px; padding: 0; list-style: none; }
  .group.g2 { margin-bottom: 163px; }
  .group.g3 { margin-bottom: 202px; }
  .group li { display: flex; justify-content: space-between; align-items: center; height: 67px; padding-right: 66px; }
  .group a { display: flex; justify-content: flex-end; overflow: hidden; white-space: nowrap; line-height: 48px; }
  .group button { display: flex; padding: 4px 0 0; border: 0; background: none; }
  .group button svg { width: 18px; height: 9px; }

  .content { min-width: 0; overflow: hidden; padding: 28px 330px 0 100px; }
  h1 { margin: 0 0 32px; padding-bottom: 24px; border-bottom: 4px solid #d5d5d5; font-size: 98px; font-weight: 500; line-height: 150px; }
  .intro { margin: 64px 0 0; text-indent: 80px; font-family: var(--looped); font-size: 32px; line-height: 48px; white-space: nowrap; }
  .intro strong { font-family: 'Open Sans', sans-serif; font-size: 29px; font-weight: 600; line-height: 1; }
  .latin { font-family: var(--sans); font-size: 30px; line-height: 1; }
  h2 { display: flex; flex-direction: column; align-items: center; margin: 93px 0 0; font-size: 58px; font-weight: 500; line-height: 90px; color: #000; }
  h2::after { content: ''; width: 284px; height: 2px; margin-top: 6px; background: #3f8cff; }
  .cards { display: grid; grid-template-columns: 720px 720px; justify-content: center; gap: 70px 40px; margin-top: 120px; }
  .card { background: #f7f7f7; box-shadow: 0 6px 2px -4px rgb(0 0 0 / 20%), 0 4px 4px rgb(0 0 0 / 14%), 0 2px 10px rgb(0 0 0 / 12%); }
  .map { display: block; width: 100%; }
  .text { padding: 47px 30px 78px; }
  h3 { margin: 0 0 52px; font-size: 45px; font-weight: 400; line-height: 60px; color: #666; }
  .text p { margin: 0; text-indent: 80px; font-family: var(--looped); font-size: 32px; line-height: 48px; white-space: nowrap; }
  .text a { color: #3f8cff; }
</style>
